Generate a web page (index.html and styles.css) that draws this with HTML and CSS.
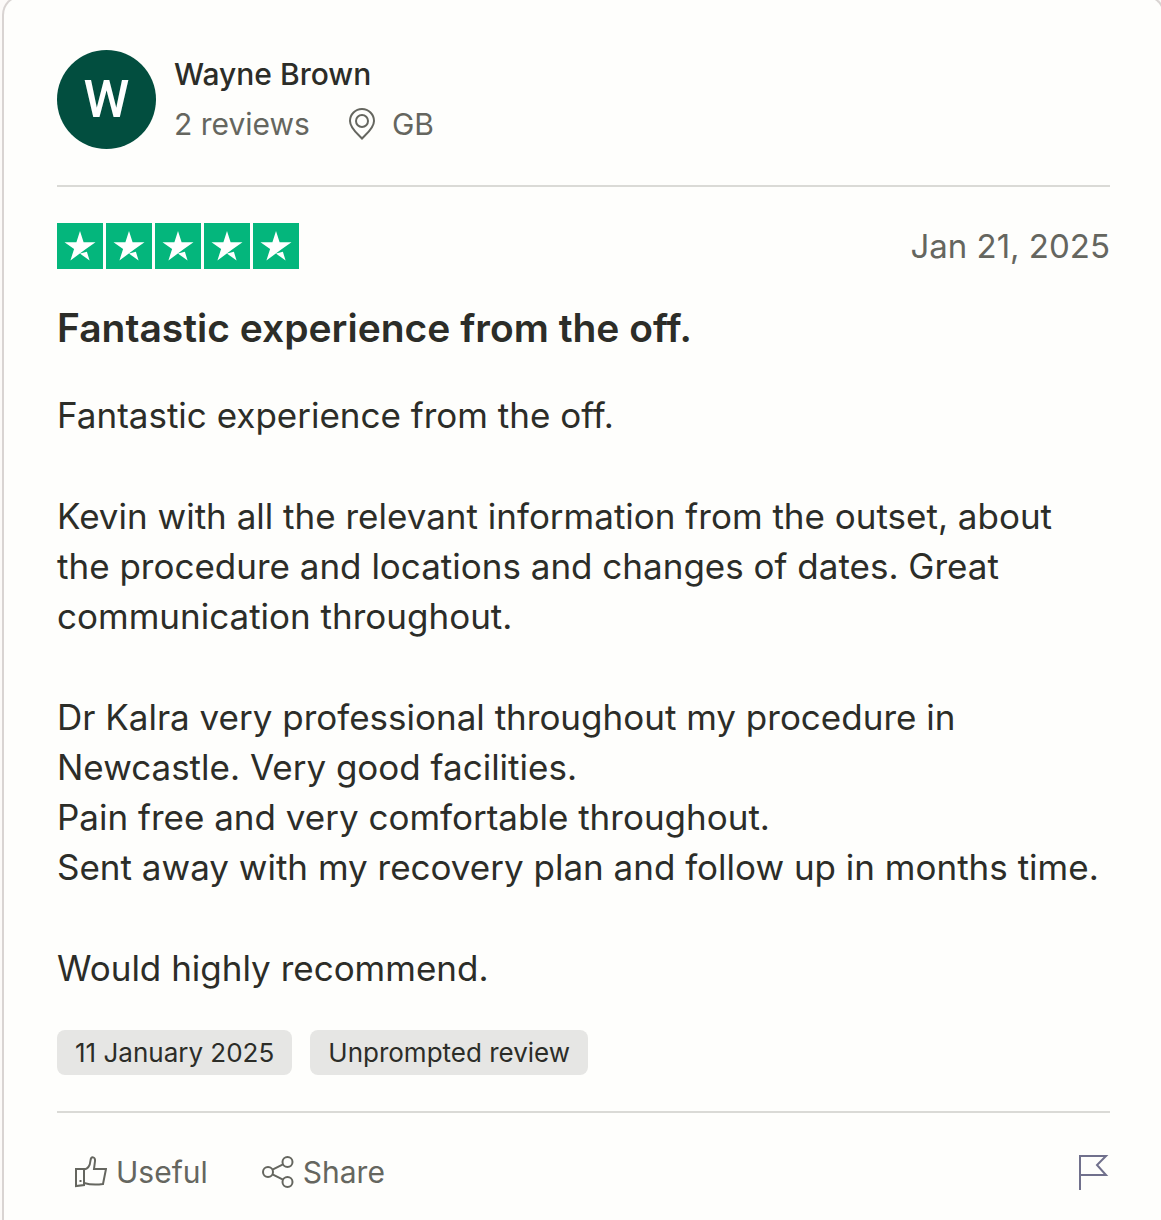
FILE: index.html
```html
<!DOCTYPE html>
<html lang="en">
<head>
    <meta charset="UTF-8">
    <meta name="viewport" content="width=device-width, initial-scale=1.0">
    <title>Wayne Brown - Review</title>
    <link rel="stylesheet" href="styles.css">
</head>
<body>
    <svg width="0" height="0" class="sprite" aria-hidden="true">
        <symbol id="star" viewBox="0 0 46 46">
            <path fill="#04b67c" d="M0 0h46v46H0z"/>
            <path fill="#fff" d="M23 8l3.600 11.200h11.900l-9.600 6.900-15.500 11.300 3.700-11.300-9.600-6.900h11.900z"/>
            <path fill="#fff" d="M23 30.600l6.900-1.800 2.700 8.800z"/>
        </symbol>
    </svg>

    <div class="page">
        <article class="card">
            <header class="consumer">
                <div class="avatar">W</div>
                <div class="consumer-info">
                    <div class="name">Wayne Brown</div>
                    <div class="details">
                        <span>2 reviews</span>
                        <span class="location">
                            <svg width="28" height="32" viewBox="0 0 28 32" fill="none" stroke="currentColor" stroke-width="2">
                                <path d="M14 30.500C10 26 2 20.500 2 13a12 12 0 0 1 24 0c0 7.500-8 13-12 17.500z"/>
                                <circle cx="14" cy="13" r="6"/>
                            </svg>
                            GB
                        </span>
                    </div>
                </div>
            </header>

            <section class="review">
                <div class="review-head">
                    <div class="stars" role="img" aria-label="Rated 5 out of 5 stars">
                        <svg><use href="#star"/></svg>
                        <svg><use href="#star"/></svg>
                        <svg><use href="#star"/></svg>
                        <svg><use href="#star"/></svg>
                        <svg><use href="#star"/></svg>
                    </div>
                    <time datetime="2025-01-21">Jan 21, 2025</time>
                </div>

                <h2>Fantastic experience from the off.</h2>

                <div class="review-text">
                    <p>Fantastic experience from the off.</p>
                    <p>Kevin with all the relevant information from the outset, about the procedure and locations and changes of dates. Great communication throughout.</p>
                    <p>Dr Kalra very professional throughout my procedure in Newcastle. Very good facilities.<br>
                    Pain free and very comfortable throughout.<br>
                    Sent away with my recovery plan and follow up in months time.</p>
                    <p>Would highly recommend.</p>
                </div>

                <div class="tags">
                    <span class="tag">11 January 2025</span>
                    <span class="tag">Unprompted review</span>
                </div>
            </section>

            <footer class="actions">
                <button type="button">
                    <svg width="32" height="32" viewBox="0 0 32 32" fill="none" stroke="currentColor" stroke-width="2">
                        <path d="M1 13h8v16l-8 1z"/>
                        <path d="M9 13.500c4-.5 6-3.500 6.500-9 .5-4.500 5-4 4.500.5L19 13h12l-3 15c-7 1-13 .8-19-1"/>
                        <path d="M4.500 25h2"/>
                    </svg>
                    Useful
                </button>
                <button type="button">
                    <svg width="32" height="32" viewBox="0 0 32 32" fill="none" stroke="currentColor" stroke-width="2">
                        <circle cx="6" cy="16" r="5"/>
                        <circle cx="25.500" cy="6" r="5"/>
                        <circle cx="25.500" cy="26" r="5"/>
                        <path d="M10.500 13.700l10.500-5.400M10.500 18.300l10.500 5.400"/>
                    </svg>
                    Share
                </button>
                <button type="button" class="flag" aria-label="Flag review">
                    <svg width="32" height="36" viewBox="0 0 32 36" fill="none" stroke="currentColor" stroke-width="2">
                        <path d="M2 36V2h26l-9 9 9 10H2"/>
                    </svg>
                </button>
            </footer>
        </article>
    </div>
</body>
</html>
```
FILE: styles.css
```css
* {
    box-sizing: border-box;
}

body {
    margin: 0;
    background-color: #fcfaf8;
    font-family: Inter, "Liberation Sans", sans-serif;
    color: #2c2d28;
}

.sprite {
    position: absolute;
}

.page {
    display: flex;
    min-height: 100vh;
    overflow: hidden;
}

.card {
    flex: 1;
    margin: -5px -4px 0 2px;
    padding: 52px 53px 24px;
    background-color: #fefefc;
    border: 2px solid #d9d4d2;
    border-bottom: none;
    border-radius: 20px 20px 0 0;
}

.consumer {
    display: flex;
    align-items: center;
    gap: 18px;
    padding-bottom: 36px;
    border-bottom: 2px solid #dadad6;
}

.avatar {
    display: flex;
    align-items: center;
    justify-content: center;
    width: 99px;
    height: 99px;
    border-radius: 50%;
    background-color: #024e3f;
    color: #fff;
    font-family: Roboto, sans-serif;
    font-size: 52px;
    font-weight: 500;
}

.name,
.details {
    font-size: 30px;
    line-height: 50px;
}

.name {
    font-weight: 500;
}

.details {
    display: flex;
    gap: 38px;
    color: #65665f;
}

.location {
    display: flex;
    align-items: center;
    gap: 16px;
}

.review {
    padding: 36px 0;
    border-bottom: 2px solid #dadad6;
}

.review-head {
    display: flex;
    justify-content: space-between;
    align-items: center;
}

.stars {
    display: flex;
    gap: 3px;
}

.stars svg {
    width: 46px;
    height: 46px;
}

time {
    color: #65665f;
    font-size: 33px;
    line-height: 46px;
}

h2 {
    margin: 34px 0 37px;
    font-size: 39px;
    font-weight: 600;
    line-height: 50px;
}

.review-text {
    font-size: 35px;
    line-height: 50px;
}

.review-text p {
    margin: 0 0 51px;
}

.review-text p:last-child {
    margin-bottom: 37px;
}

.tags {
    display: flex;
    gap: 18px;
}

.tag {
    padding: 0 18px;
    border-radius: 8px;
    background-color: #e6e6e4;
    font-size: 26px;
    line-height: 45px;
}

.actions {
    display: flex;
    align-items: center;
    gap: 54px;
    padding: 36px 0 0 18px;
}

.actions button {
    display: flex;
    align-items: center;
    gap: 9px;
    padding: 0;
    border: none;
    background: none;
    color: #65665f;
    font-family: inherit;
    font-size: 30px;
    line-height: 46px;
    cursor: pointer;
}

.actions .flag {
    margin-left: auto;
    color: #70708c;
}
```
